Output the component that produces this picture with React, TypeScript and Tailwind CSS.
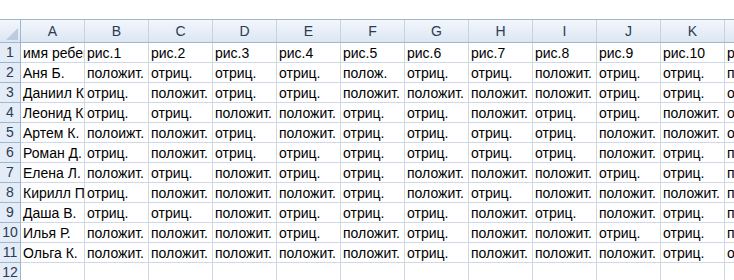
const columns = ['A', 'B', 'C', 'D', 'E', 'F', 'G', 'H', 'I', 'J', 'K', 'L'];

const rows: string[][] = [
  ['имя ребенка', 'рис.1', 'рис.2', 'рис.3', 'рис.4', 'рис.5', 'рис.6', 'рис.7', 'рис.8', 'рис.9', 'рис.10', 'рис.11'],
  ['Аня Б.', 'положит.', 'отриц.', 'отриц.', 'отриц.', 'полож.', 'отриц.', 'отриц.', 'положит.', 'отриц.', 'отриц.', 'положит.'],
  ['Даниил К.', 'отриц.', 'положит.', 'отриц.', 'отриц.', 'положит.', 'положит.', 'положит.', 'положит.', 'отриц.', 'отриц.', 'отриц.'],
  ['Леонид К.', 'отриц.', 'отриц.', 'положит.', 'положит.', 'отриц.', 'отриц.', 'положит.', 'отриц.', 'отриц.', 'положит.', 'отриц.'],
  ['Артем К.', 'полоижт.', 'положит.', 'отриц.', 'положит.', 'отриц.', 'отриц.', 'отриц.', 'отриц.', 'положит.', 'положит.', 'отриц.'],
  ['Роман Д.', 'отриц.', 'положит.', 'отриц.', 'отриц.', 'отриц.', 'отриц.', 'отриц.', 'отриц.', 'положит.', 'отриц.', 'положит.'],
  ['Елена Л.', 'положит.', 'отриц.', 'положит.', 'отриц.', 'отриц.', 'положит.', 'положит.', 'положит.', 'отриц.', 'отриц.', 'положит.'],
  ['Кирилл П.', 'отриц.', 'положит.', 'положит.', 'положит.', 'отриц.', 'положит.', 'отриц.', 'положит.', 'положит.', 'положит.', 'положит.'],
  ['Даша В.', 'отриц.', 'отриц.', 'положит.', 'отриц.', 'отриц.', 'отриц.', 'положит.', 'отриц.', 'положит.', 'отриц.', 'положит.'],
  ['Илья Р.', 'положит.', 'положит.', 'положит.', 'отриц.', 'положит.', 'отриц.', 'положит.', 'положит.', 'отриц.', 'отриц.', 'положит.'],
  ['Ольга К.', 'положит.', 'положит.', 'положит.', 'положит.', 'положит.', 'отриц.', 'положит.', 'положит.', 'положит.', 'отриц.', 'отриц.'],
  ['', '', '', '', '', '', '', '', '', '', '', ''],
];

export default function App() {
  return (
    <div className="w-[734px] h-[280px] overflow-hidden bg-white font-['Liberation_Sans',sans-serif] text-[14px] text-black">
      <div className="h-[19px]" />

      {/* Column headers */}
      <div className="flex h-[24px] border-t border-b border-[#9eb6ce] bg-gradient-to-b from-[#f3f7fc] to-[#dce6f2]">
        <div className="relative w-[21px] shrink-0 border-r border-[#9eb6ce]">
          <div className="absolute right-[2px] bottom-[2px] w-0 h-0 border-l-[12px] border-l-transparent border-b-[12px] border-b-[#bccbdd]" />
        </div>
        {columns.map((c) => (
          <div
            key={c}
            className="flex w-[64px] shrink-0 items-center justify-center border-r border-[#c5d3e3] text-[#2c3b55]"
          >
            {c}
          </div>
        ))}
      </div>

      {/* Data rows */}
      {rows.map((row, i) => (
        <div key={i} className="flex h-[20px]">
          <div className="flex w-[21px] shrink-0 items-center justify-center border-r border-b border-[#9eb6ce] bg-[#e4ecf7] text-[#2c3b55]">
            {i + 1}
          </div>
          {row.map((cell, j) => (
            <div
              key={j}
              className="w-[64px] shrink-0 overflow-hidden whitespace-nowrap border-r border-b border-[#d0d7e5] pl-[2px] leading-[20px]"
            >
              {cell}
            </div>
          ))}
        </div>
      ))}
    </div>
  );
}
